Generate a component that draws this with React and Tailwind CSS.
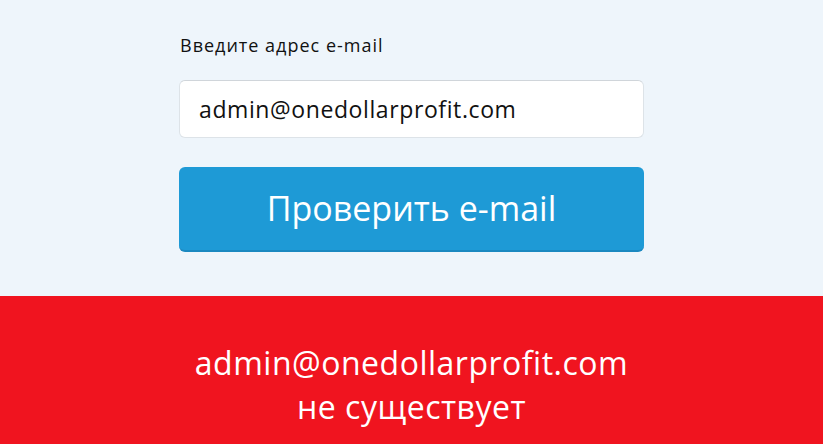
import React, { useState } from 'react';

const font = { fontFamily: '"Open Sans", "Noto Sans", sans-serif', fontVariantLigatures: 'none' };

export default function App() {
  const [email, setEmail] = useState('admin@onedollarprofit.com');

  return (
    <div className="w-[823px] h-[444px] flex flex-col bg-[#eef5fb]" style={font}>
      {/* form */}
      <div className="h-[296px] flex flex-col pl-[179px] pt-[33px]">
        <label className="text-[18px] leading-[24px] tracking-[1px] text-[#111] pl-px">Введите адрес e-mail</label>
        <input
          value={email}
          onChange={e => setEmail(e.target.value)}
          className="mt-[23px] w-[465px] h-[58px] bg-white rounded-[6px] border border-[#dde3e8] border-t-[#d0d5da] px-[19px] text-[23px] tracking-[0.6px] text-[#111] outline-none"
          style={font}
        />
        <button
          className="mt-[29px] w-[465px] h-[85px] rounded-[6px] bg-[#1e9ad6] border-b-2 border-[#1a88c0] text-white text-[34px] leading-none pb-[2px]"
          style={font}
        >
          Проверить e-mail
        </button>
      </div>

      {/* result */}
      <div className="flex-1 bg-[#f0141f] flex flex-col items-center pt-[45px] text-white text-[32px] tracking-[0.5px] leading-[44px]">
        <span>admin@onedollarprofit.com</span>
        <span>не существует</span>
      </div>
    </div>
  );
}
